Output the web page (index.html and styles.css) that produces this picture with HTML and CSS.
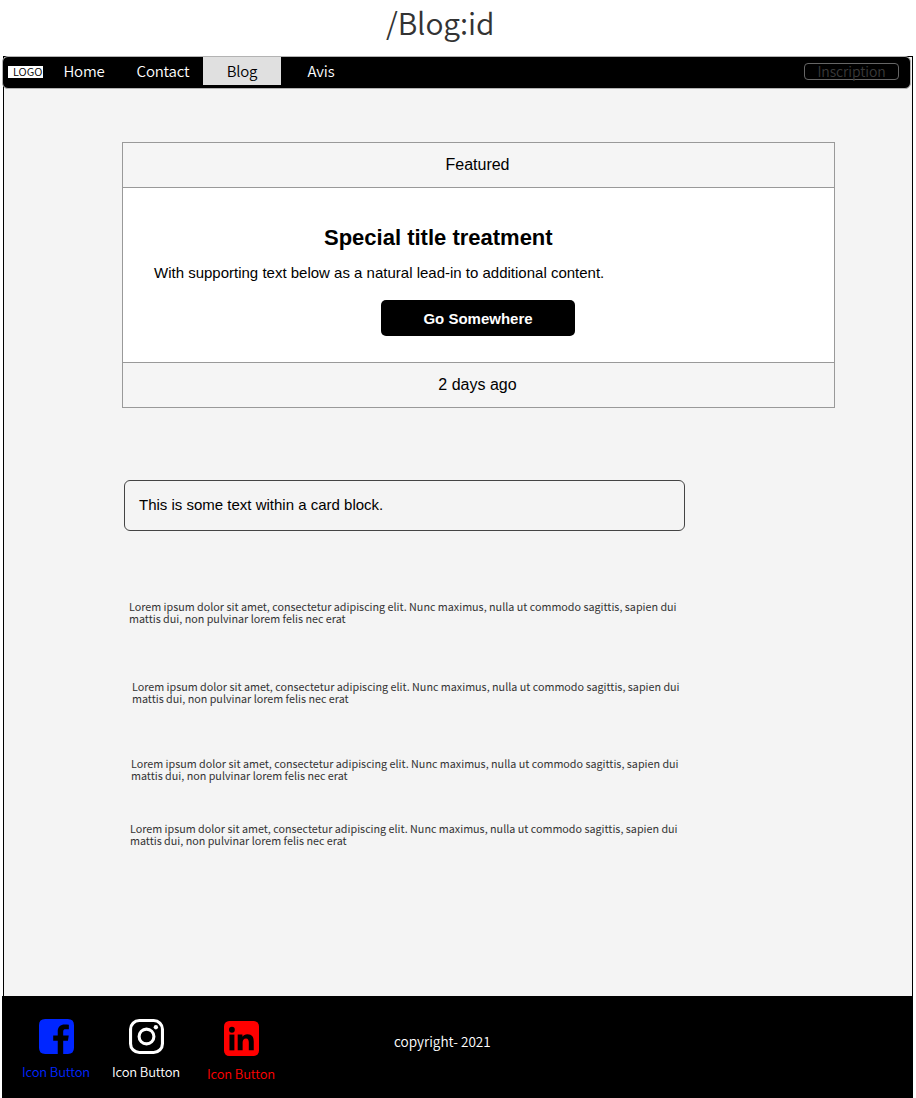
FILE: index.html
```html
<!DOCTYPE html>
<html lang="en">
<head>
<meta charset="utf-8">
<title>/Blog:id</title>
<link rel="stylesheet" href="styles.css">
</head>
<body>
<h1 class="page-title">/Blog:id</h1>
<div class="frame">
  <nav class="navbar">
    <span class="logo">LOGO</span>
    <div class="tabs">
      <a class="tab">Home</a>
      <a class="tab">Contact</a>
      <a class="tab active">Blog</a>
      <a class="tab">Avis</a>
    </div>
    <button class="signup">Inscription</button>
  </nav>
  <main class="content">
    <section class="card">
      <header class="card-strip">Featured</header>
      <div class="card-body">
        <h2 class="card-title">Special title treatment</h2>
        <p class="card-text">With supporting text below as a natural lead-in to additional content.</p>
        <button class="cta">Go Somewhere</button>
      </div>
      <footer class="card-strip">2 days ago</footer>
    </section>
    <section class="block">This is some text within a card block.</section>
    <p class="lorem first">Lorem ipsum dolor sit amet, consectetur adipiscing elit. Nunc maximus, nulla ut commodo sagittis, sapien dui<br>mattis dui, non pulvinar lorem felis nec erat</p>
    <p class="lorem second">Lorem ipsum dolor sit amet, consectetur adipiscing elit. Nunc maximus, nulla ut commodo sagittis, sapien dui<br>mattis dui, non pulvinar lorem felis nec erat</p>
    <p class="lorem third">Lorem ipsum dolor sit amet, consectetur adipiscing elit. Nunc maximus, nulla ut commodo sagittis, sapien dui<br>mattis dui, non pulvinar lorem felis nec erat</p>
    <p class="lorem fourth">Lorem ipsum dolor sit amet, consectetur adipiscing elit. Nunc maximus, nulla ut commodo sagittis, sapien dui<br>mattis dui, non pulvinar lorem felis nec erat</p>
  </main>
</div>
<footer class="footer">
  <a class="social facebook">
    <svg class="icon" viewBox="0 0 34 34"><path fill="currentColor" d="M6 0H28Q34 0 34 6V28Q34 34 28 34H23.5V21.2H28.1L28.9 16H23.5V12.2C23.5 10.6 24.3 10 25.8 10H29V5.700C27.800 5.500 26.500 5.400 25 5.400C20.800 5.400 18.200 7.800 18.200 12V16H13.800V21.200H18.200V34H6Q0 34 0 28V6Q0 0 6 0Z"/></svg>
    <span>Icon Button</span>
  </a>
  <a class="social instagram">
    <svg class="icon" viewBox="0 0 34 34" fill="none" stroke="currentColor" stroke-width="3"><rect x="1.500" y="1.500" width="31" height="31" rx="8.500"/><circle cx="17" cy="17" r="7.200"/><circle cx="26.100" cy="8" r="2.100" fill="currentColor" stroke="none"/></svg>
    <span>Icon Button</span>
  </a>
  <a class="social linkedin">
    <svg class="icon" viewBox="0 0 34 34"><rect width="34" height="34" rx="5" fill="currentColor"/><g fill="#000"><circle cx="7.700" cy="8.500" r="2.800"/><path d="M5.300 13.200H10.100V28.500H5.300Z"/><path d="M13.300 13.200H17.900V15.300C18.900 13.700 20.500 12.800 22.700 12.800C27.400 12.800 28.900 15.600 28.900 20V28.500H24.100V21C24.100 18.700 23.500 17 21.400 17C19.100 17 18.100 18.600 18.100 21V28.500H13.300Z"/></g></svg>
    <span>Icon Button</span>
  </a>
  <p class="copyright">copyright- 2021</p>
</footer>
</body>
</html>
```
FILE: styles.css
```css
* { box-sizing: border-box; }
body { margin: 0; background: #fff; color: #333; font-family: "Noto Sans CJK SC", "Noto Sans", sans-serif; font-weight: 350; white-space: nowrap; }
h1, h2, p { margin: 0; font-weight: inherit; }
button { font-family: inherit; font-weight: inherit; padding: 0; }
.page-title { height: 56px; padding-left: 386px; font-family: "Noto Sans CJK SC DemiLight", "Noto Sans CJK SC", sans-serif; font-size: 30px; line-height: 44px; letter-spacing: -0.1px; }
.frame { width: 910px; height: 940px; margin-left: 3px; border: 1px solid #000; border-bottom: 0; background: #f4f4f4; }
.navbar { display: flex; align-items: flex-start; width: 909px; height: 33px; margin: -1px 0 0 -2px; border: 1px solid #b3b3b3; border-radius: 6px; background: #000; }
.logo { width: 35px; height: 12px; margin: 9px 0 0 5px; padding-left: 5px; background: #fff; color: #000; font-size: 11px; line-height: 11px; }
.tabs { display: flex; gap: 1px; margin-left: 2px; }
.tab { width: 78px; height: 28px; color: #fff; font-size: 15px; line-height: 28px; text-align: center; letter-spacing: -0.2px; }
.tab.active { background: #e0e0e0; color: #000; }
.signup { width: 95px; height: 17px; margin: 6px 11px 0 auto; border: 1px solid #666; border-radius: 4px; background: #000; color: #3a3a3a; font-size: 14px; line-height: 15px; letter-spacing: -0.1px; }
.content { display: flex; flex-direction: column; align-items: flex-start; padding: 53px 0 0 118px; }
.card { width: 713px; height: 266px; border: 1px solid #999; background: #fff; color: #000; font-family: "Liberation Sans", Arial, sans-serif; }
.card-strip { height: 44px; background: #f5f5f5; font-size: 16px; line-height: 44px; text-align: center; padding-right: 2px; }
.card-body { display: flex; flex-direction: column; height: 176px; padding: 36px 0 0 31px; border: solid #999; border-width: 1px 0; }
.card-title { margin-left: 170px; font-size: 22px; line-height: 28px; font-weight: 700; }
.card-text { margin-top: 12px; font-size: 15px; line-height: 18px; }
.cta { width: 194px; height: 36px; margin: 18px 0 0 227px; padding-top: 1px; border: 0; border-radius: 5px; background: #000; color: #fff; font-size: 15px; font-weight: 700; line-height: 35px; }
.block { width: 561px; height: 51px; margin: 72px 0 0 2px; padding-left: 14px; border: 1px solid #444; border-radius: 6px; color: #000; font-family: "Liberation Sans", Arial, sans-serif; font-size: 15px; line-height: 47px; }
.lorem { font-size: 10.75px; font-weight: 400; line-height: 12px; }
.first { margin: 70px 0 0 7px; }
.second { margin: 56px 0 0 10px; }
.third { margin: 53px 0 0 9px; }
.fourth { margin: 41px 0 0 8px; }
.footer { display: flex; width: 911px; height: 102px; margin-left: 2px; padding-left: 20px; background: #000; color: #fff; }
.social { display: flex; flex-direction: column; align-items: center; width: 68px; padding-top: 23px; font-size: 13px; line-height: 18px; letter-spacing: -0.15px; }
.icon { width: 35px; height: 35px; margin-bottom: 9px; }
.facebook { color: #0026ff; }
.instagram { margin-left: 22px; }
.linkedin { margin-left: 27px; padding-top: 25px; color: #f00; }
.copyright { margin-left: 119px; padding-top: 35px; font-size: 13.6px; line-height: 20px; }
```
